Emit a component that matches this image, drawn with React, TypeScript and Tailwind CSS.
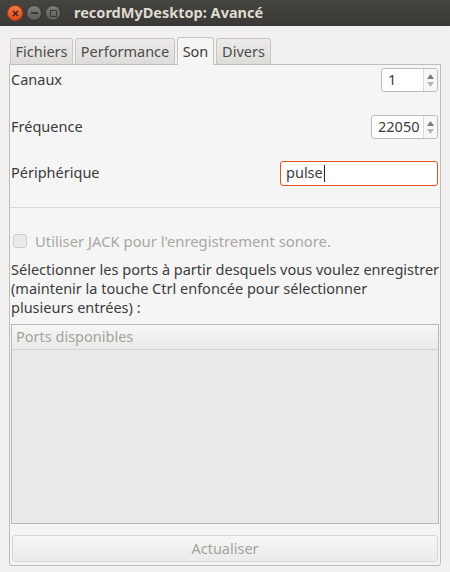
import React from "react";

const font = { fontFamily: '"Noto Sans", "Open Sans", sans-serif' };

function Spin({ value, w }: { value: string; w: string }) {
  return (
    <div className={`flex h-[24px] ${w} rounded-[3px] border border-[#bebab5] bg-white`}>
      <div className="flex flex-1 items-center pl-[6px] text-[14.5px] text-[#3c3c3c]">{value}</div>
      <div className="flex w-[14px] flex-col items-center justify-center border-l border-[#dcdad5] bg-[#f7f7f7] rounded-r-[3px]">
        <svg width="7" height="5" viewBox="0 0 7 5" className="mb-[3px]"><path d="M0 5 L3.5 0 L7 5 Z" fill="#7a7a7a" /></svg>
        <svg width="7" height="5" viewBox="0 0 7 5"><path d="M0 0 L3.5 5 L7 0 Z" fill="#b5b5b5" /></svg>
      </div>
    </div>
  );
}

export default function App() {
  return (
    <div className="flex h-[572px] w-[450px] flex-col bg-[#f2f1f0] text-[#3c3c3c]" style={font}>
      <div className="flex h-[26px] items-center bg-gradient-to-b from-[#45443f] to-[#3a3935] pl-[7px]">
        <div className="flex h-[16px] w-[16px] items-center justify-center rounded-full bg-gradient-to-b from-[#f37a4c] to-[#df4a16] border border-[#b93c10]">
          <svg width="7" height="7" viewBox="0 0 7 7"><path d="M1 1 L6 6 M6 1 L1 6" stroke="#3a2010" strokeWidth="1.3" /></svg>
        </div>
        <div className="ml-[3px] flex h-[16px] w-[16px] items-center justify-center rounded-full bg-gradient-to-b from-[#7e7d78] to-[#5c5b56] border border-[#353430]">
          <div className="h-[1.5px] w-[7px] bg-[#3a3935]" />
        </div>
        <div className="ml-[3px] flex h-[16px] w-[16px] items-center justify-center rounded-full bg-gradient-to-b from-[#7e7d78] to-[#5c5b56] border border-[#353430]">
          <div className="h-[7px] w-[7px] border border-[#3a3935]" />
        </div>
        <div className="ml-[13px] text-[14.5px] font-bold text-[#dfdbd2]">
          recordMyDesktop: Avancé
        </div>
      </div>

      <div className="flex flex-1 flex-col px-[9px] pb-[6px] pt-[11px]">
        <div className="flex items-end gap-[2px] pl-[1px]">
          {[
            ["Fichiers", "w-[63px]"],
            ["Performance", "w-[100px]"],
          ].map(([t, w]) => (
            <div key={t} className={`flex h-[26px] ${w} items-center justify-center rounded-t-[3px] border border-b-0 border-[#c8c5c0] bg-gradient-to-b from-[#ecebea] to-[#dedcd9] text-[14.5px] text-[#4c4c4c]`}>
              {t}
            </div>
          ))}
          <div className="relative z-10 -mb-[1px] flex h-[28px] w-[37px] items-center justify-center rounded-t-[3px] border border-b-0 border-[#c8c5c0] bg-[#f5f5f5] text-[14.5px] text-[#3c3c3c]">
            Son
          </div>
          <div className="flex h-[26px] w-[55px] items-center justify-center rounded-t-[3px] border border-b-0 border-[#c8c5c0] bg-gradient-to-b from-[#ecebea] to-[#dedcd9] text-[14.5px] text-[#4c4c4c]">
            Divers
          </div>
        </div>

        <div className="flex flex-1 flex-col rounded-b-[3px] border border-[#c0bdb8] bg-[#f5f5f5]">
          <div className="mt-[3px] flex h-[24px] items-center justify-between pl-[1px] pr-[2px]">
            <span className="text-[14.5px]">Canaux</span>
            <Spin value="1" w="w-[57px]" />
          </div>
          <div className="mt-[23px] flex h-[24px] items-center justify-between pl-[1px] pr-[2px]">
            <span className="text-[14.5px]">Fréquence</span>
            <Spin value="22050" w="w-[67px]" />
          </div>
          <div className="mt-[22px] flex h-[24px] items-center justify-between pl-[1px] pr-[2px]">
            <span className="text-[14.5px]">Périphérique</span>
            <div className="flex h-[25px] w-[158px] items-center rounded-[3px] border border-[#e2531d] bg-white pl-[5px] text-[14.5px]">
              pulse<span className="ml-[1px] inline-block h-[17px] w-[1px] bg-[#222]" />
            </div>
          </div>
          <div className="mt-[22px] h-px bg-[#dcdad6]" />
          <div className="mt-[23px] flex h-[20px] items-center pl-[3px]">
            <div className="h-[14px] w-[14px] rounded-[3px] border border-[#cfcdc9] bg-[#ebeae8]" />
            <span className="ml-[8px] text-[14.8px] text-[#a9a7a3]">Utiliser JACK pour l'enregistrement sonore.</span>
          </div>
          <div className="mt-[9px] whitespace-nowrap pl-[1px] text-[14.5px] leading-[19px]">
            Sélectionner les ports à partir desquels vous voulez enregistrer
            <br />
            (maintenir la touche Ctrl enfoncée pour sélectionner
            <br />
            plusieurs entrées) :
          </div>
          <div className="mx-[1px] mt-[7px] flex h-[200px] flex-col border border-[#bab6b1] bg-[#ebeae8]">
            <div className="flex h-[25px] items-center border-b border-[#d6d3cf] bg-gradient-to-b from-[#f6f6f5] to-[#ebeae8] pl-[4px] text-[14.5px] text-[#a5a39f]">
              Ports disponibles
            </div>
          </div>
          <div className="mx-[2px] mt-[11px] flex h-[27px] items-center justify-center rounded-[3px] border border-[#d8d6d2] bg-gradient-to-b from-[#f6f6f5] to-[#ecebea] text-[14.5px] text-[#a5a39f]">
            Actualiser
          </div>
        </div>
      </div>
    </div>
  );
}
